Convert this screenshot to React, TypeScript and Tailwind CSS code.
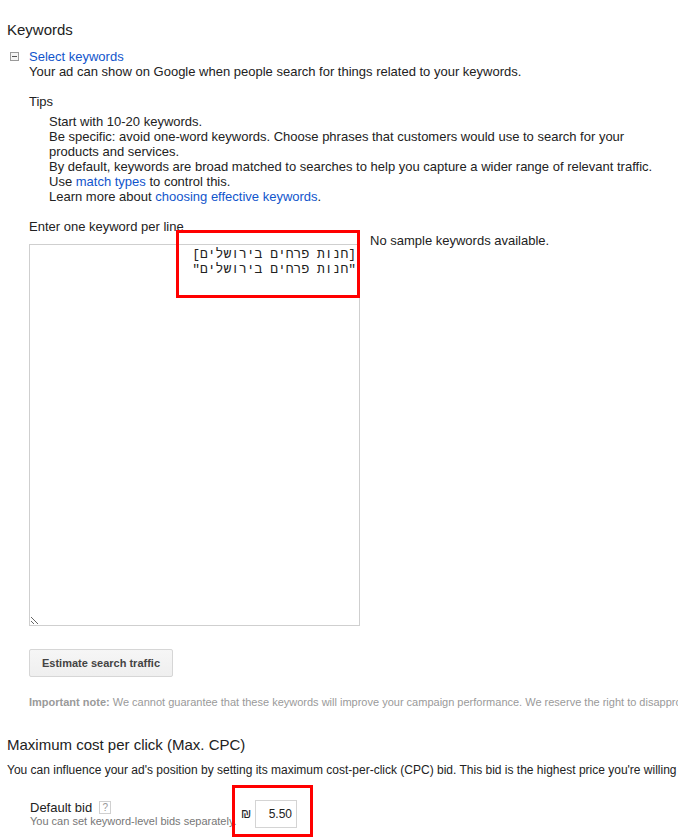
import React from "react";

export default function App() {
  return (
    <div className="relative w-[678px] h-[839px] overflow-hidden bg-white font-['Liberation_Sans',Arial,sans-serif] text-[13px] leading-[15px] text-[#222]">
      <div className="px-[7px] pt-[21px]">
        <h2 className="text-[15px] leading-[18px] font-normal text-[#222]">Keywords</h2>

        <div className="mt-[10px] flex items-center">
          <span className="ml-[3px] w-[9px] h-[9px] border border-[#9a9a9a] bg-[#f4f4f4] flex items-center justify-center">
            <span className="block w-[5px] h-[1px] bg-[#555]" />
          </span>
          <a className="ml-[10px] text-[#1155cc] cursor-pointer">Select keywords</a>
        </div>

        <div className="pl-[22px]">
          <p>Your ad can show on Google when people search for things related to your keywords.</p>
          <p className="mt-[15px]">Tips</p>
          <div className="mt-[5px] pl-[20px]">
            <p>Start with 10-20 keywords.</p>
            <p>Be specific: avoid one-word keywords. Choose phrases that customers would use to search for your products and services.</p>
            <p>
              By default, keywords are broad matched to searches to help you capture a wider range of relevant traffic.
              <br />
              Use <a className="text-[#1155cc] cursor-pointer">match types</a> to control this.
            </p>
            <p>
              Learn more about <a className="text-[#1155cc] cursor-pointer">choosing effective keywords</a>.
            </p>
          </div>

          <div className="mt-[15px] flex items-start">
            <div className="flex-none">
              <p>Enter one keyword per line</p>
              <textarea
                dir="rtl"
                className="mt-[10px] block w-[331px] h-[382px] border border-[#cfcfcf] p-[2px] pr-[3px] font-['Liberation_Mono','DejaVu_Sans_Mono',monospace] text-[13px] leading-[15px] text-[#222] outline-none"
                defaultValue={'[חנות פרחים בירושלים]\n"חנות פרחים בירושלים"'}
              />
            </div>
            <p className="ml-[10px] pt-[14px] whitespace-nowrap">No sample keywords available.</p>
          </div>

          <button className="mt-[23px] h-[28px] px-[12px] border border-[#d6d6d6] rounded-[2px] bg-gradient-to-b from-[#f6f6f6] to-[#efefef] text-[11px] font-bold text-[#444] leading-[13px]">
            Estimate search traffic
          </button>

          <p className="mt-[19px] whitespace-nowrap text-[11px] leading-[13px] text-[#9a9a9a]">
            <span className="font-bold">Important note:</span> We cannot guarantee that these keywords will improve your campaign performance. We reserve the right to disapprove any keywords you add.
          </p>
        </div>

        <h2 className="mt-[27px] text-[15px] leading-[18px] font-normal text-[#222]">Maximum cost per click (Max. CPC)</h2>
        <p className="mt-[9px] whitespace-nowrap text-[12px] leading-[14px]">
          You can influence your ad's position by setting its maximum cost-per-click (CPC) bid. This bid is the highest price you're willing to pay when someone clicks your ad.
        </p>

        <div className="mt-[23px] pl-[23px] flex items-start">
          <div className="flex-none w-[211px]">
            <div className="flex items-center">
              <span>Default bid</span>
              <span className="ml-[7px] w-[12px] h-[13px] border border-[#d0d0d0] flex items-center justify-center text-[10px] leading-[10px] text-[#999]">?</span>
            </div>
            <p className="whitespace-nowrap text-[11px] leading-[13px] text-[#777]">You can set keyword-level bids separately.</p>
          </div>
          <span className="flex-none w-[14px] h-[28px] flex items-center text-[12px] text-[#222]">₪</span>
          <div className="flex-none w-[42px] h-[28px] border border-[#d4d4d4] flex items-center justify-end pr-[4px] text-[12px] text-[#222]">
            5.50
          </div>
        </div>
      </div>

      <div className="absolute left-[176px] top-[230px] w-[184px] h-[68px] border-[3px] border-[#ff0000] pointer-events-none" />
      <div className="absolute left-[232px] top-[785px] w-[81px] h-[52px] border-[3px] border-[#ff0000] pointer-events-none" />
    </div>
  );
}
